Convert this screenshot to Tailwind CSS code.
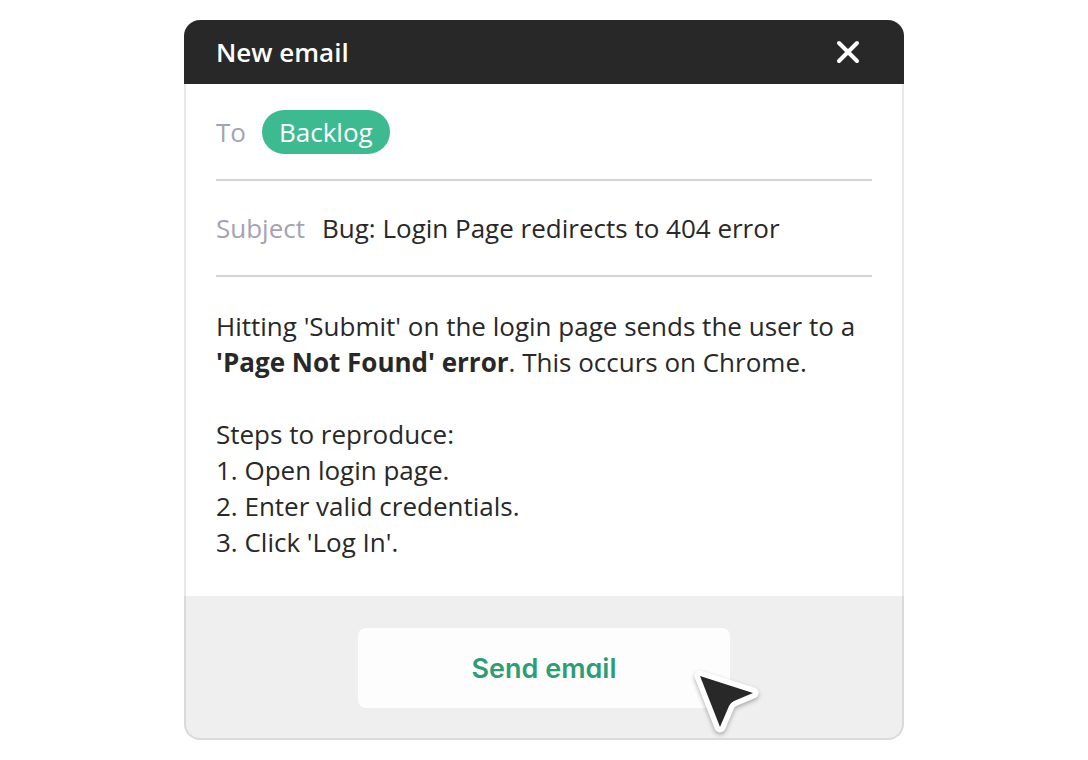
<!DOCTYPE html>
<html lang="en">
<head>
  <meta charset="UTF-8" />
  <meta name="viewport" content="width=device-width, initial-scale=1.0" />
  <title>New email</title>
  <script src="https://cdn.jsdelivr.net/npm/@tailwindcss/browser@4"></script>
</head>
<body class="bg-white min-h-screen px-4 py-5 font-['Open_Sans',sans-serif] text-[26px] leading-9 text-[#282828]">
  <form class="w-full max-w-[720px] mx-auto" onsubmit="return false">
    <header class="h-16 px-8 flex items-center justify-between bg-[#282828] text-white rounded-t-2xl">
      <h1 class="font-semibold">New email</h1>
      <button type="button" aria-label="Close" class="size-12">
        <svg viewBox="0 0 48 48" class="size-12" fill="none" stroke="currentColor" stroke-width="4" stroke-linecap="round">
          <path d="M15 15 33 33M33 15 15 33" />
        </svg>
      </button>
    </header>

    <div class="border-x-2 border-[#e8e8e8] px-[30px]">
      <div class="h-[97px] flex items-center gap-4 border-b-2 border-[#d4d4da]">
        <span class="text-[#a4a2b3]">To</span>
        <span class="h-11 px-[17px] flex items-center rounded-full bg-[#3dba90] text-white">Backlog</span>
      </div>

      <div class="h-24 flex items-center gap-[17px] border-b-2 border-[#d4d4da]">
        <label for="subject" class="text-[#a4a2b3]">Subject</label>
        <input type="text" id="subject" value="Bug: Login Page redirects to 404 error" class="flex-1 min-w-0 outline-none" />
      </div>

      <div class="pt-[31px] pb-9">
        <p>Hitting 'Submit' on the login page sends the user to a <b class="font-bold">'Page Not Found' error</b>. This occurs on Chrome.</p>
        <p class="mt-9">Steps to reproduce:</p>
        <ol>
          <li>1. Open login page.</li>
          <li>2. Enter valid credentials.</li>
          <li>3. Click 'Log In'.</li>
        </ol>
      </div>
    </div>

    <footer class="pt-8 pb-[30px] flex justify-center bg-[#efefef] border-2 border-t-0 border-[#dadada] rounded-b-2xl">
      <div class="relative w-full max-w-[372px]">
        <button type="submit" class="w-full h-20 pt-0.5 rounded-lg bg-[#fdfdfd] text-[#2f9c78] font-['Inter',sans-serif] font-semibold text-[27px] [font-feature-settings:'cv11']">Send email</button>
        <!-- mouse pointer -->
        <svg viewBox="0 0 80 80" class="absolute left-[332px] top-9 size-20 pointer-events-none drop-shadow-[0_2px_2px_rgba(0,0,0,0.3)]">
          <path d="M10 12 63 29 44 37Q40 39 39 42L30 63Z" fill="#fff" stroke="#fff" stroke-width="11" stroke-linejoin="round" />
          <path d="M10 12 63 29 44 37Q40 39 39 42L30 63Z" fill="#282828" />
        </svg>
      </div>
    </footer>
  </form>
</body>
</html>
